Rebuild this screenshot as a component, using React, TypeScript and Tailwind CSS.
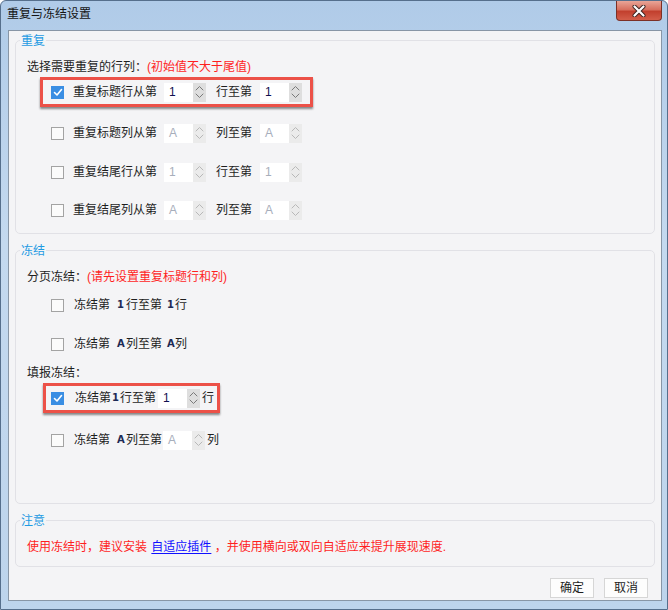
import React from 'react';

const Chevron = ({ up, color }: { up?: boolean; color: string }) => (
  <svg width="9" height="6" viewBox="0 0 9 6" fill="none">
    <polyline
      points={up ? '1,5 4.5,1.5 8,5' : '1,1 4.5,4.5 8,1'}
      stroke={color}
      strokeWidth="1"
      strokeLinecap="round"
      strokeLinejoin="round"
    />
  </svg>
);

const Check = ({ on }: { on?: boolean }) =>
  on ? (
    <span className="flex h-[13px] w-[13px] shrink-0 items-center justify-center bg-[#3a8ee3]">
      <svg width="10" height="9" viewBox="0 0 10 9" fill="none">
        <polyline points="1.5,4.5 4,7 8.5,1.5" stroke="#fff" strokeWidth="1.6" strokeLinecap="round" strokeLinejoin="round" />
      </svg>
    </span>
  ) : (
    <span className="h-[13px] w-[13px] shrink-0 border border-[#a3a3a3] bg-[#fbfbfb]" />
  );

const Spin = ({ value, disabled, className = '' }: { value: string; disabled?: boolean; className?: string }) => (
  <div className={`flex h-[19px] shrink-0 ${className}`}>
    <div
      className={`flex w-[29px] items-center bg-white pl-[5px] text-[12px] ${
        disabled ? 'text-[#a7aebb]' : 'text-[#101050]'
      }`}
    >
      {value}
    </div>
    <div
      className={`flex w-[13px] flex-col items-center justify-center gap-[2px] ${
        disabled ? 'bg-[#ebebeb]' : 'bg-[#dedede]'
      }`}
    >
      <Chevron up color={disabled ? '#b8b8b8' : '#7a7a7a'} />
      <Chevron color={disabled ? '#b8b8b8' : '#7a7a7a'} />
    </div>
  </div>
);

// bold single-character value shown inline in the freeze rows
const Glyph = ({ children, className = '' }: { children: React.ReactNode; className?: string }) => (
  <span
    className={`inline-block w-[7px] shrink-0 text-center font-['DejaVu_Sans',sans-serif] text-[10px] font-bold text-[#1c2a55] ${className}`}
  >
    {children}
  </span>
);

const Group = ({ title, className = '', children }: { title: string; className?: string; children: React.ReactNode }) => (
  <div className={`relative mx-[6px] rounded-[5px] border border-[#e1e1e6] pl-[11px] ${className}`}>
    <span className="absolute -top-[8px] left-[4px] bg-[#f4f4f6] px-[1px] leading-[16px] text-[#1f9be3]">{title}</span>
    {children}
  </div>
);

const hl = 'border-[#ec5148] shadow-[0_2px_2px_rgba(0,0,0,0.45)]';

const RepeatRow = ({
  on,
  highlight,
  label,
  mid,
  value,
  disabled,
  className = '',
}: {
  on?: boolean;
  highlight?: boolean;
  label: string;
  mid: string;
  value: string;
  disabled?: boolean;
  className?: string;
}) => (
  <div
    className={`ml-[13px] flex h-[30px] w-[273px] items-center whitespace-nowrap border-[3px] pl-[8px] ${
      highlight ? hl : 'border-transparent'
    } ${className}`}
  >
    <Check on={on} />
    <span className="ml-[9px]">{label}</span>
    <Spin value={value} disabled={disabled} className="ml-[7px]" />
    <span className="ml-[10px]">{mid}</span>
    <Spin value={value} disabled={disabled} className="ml-[8px]" />
  </div>
);

export default function App() {
  return (
    <div className="flex h-[610px] w-[668px] flex-col overflow-hidden rounded-t-[6px] border border-[#566f8c] bg-[linear-gradient(180deg,#b0cbe8_0%,#c4d9ef_40%,#bdd4ec_100%)] font-['Liberation_Sans','Noto_Sans_CJK_SC',sans-serif] text-[12px] leading-[16px] text-[#1e1e1e]">
      <div className="flex h-[29px] shrink-0 items-start justify-between">
        <span className="pl-[6px] pt-[5px] text-[#141414]">重复与冻结设置</span>
        <div className="mr-[5px] flex h-[20px] w-[46px] items-center justify-center rounded-b-[4px] border border-t-0 border-[#7c3026] bg-[linear-gradient(180deg,#e9a597_0%,#d7705f_45%,#c2402e_55%,#d35e4a_100%)]">
          <svg width="14" height="12" viewBox="0 0 14 12">
            <path d="M2.5 1.5 L11.5 10.5 M11.5 1.5 L2.5 10.5" stroke="#3b2320" strokeWidth="4" strokeLinecap="round" />
            <path d="M2.5 1.5 L11.5 10.5 M11.5 1.5 L2.5 10.5" stroke="#ffffff" strokeWidth="2.2" strokeLinecap="round" />
          </svg>
        </div>
      </div>

      <div className="ml-[7px] mr-[5px] flex h-[571px] shrink-0 flex-col border border-[#8896a6] bg-[#f4f4f6]">
        <Group title="重复" className="mt-[9px] pb-[8px] pt-[18px]">
          <div>
            选择需要重复的行列：<span className="text-[#ff1f1f]">(初始值不大于尾值)</span>
          </div>
          <RepeatRow on highlight label="重复标题行从第" mid="行至第" value="1" className="mt-[2px]" />
          <RepeatRow label="重复标题列从第" mid="列至第" value="A" disabled className="mt-[11px]" />
          <RepeatRow label="重复结尾行从第" mid="行至第" value="1" disabled className="mt-[9px]" />
          <RepeatRow label="重复结尾列从第" mid="列至第" value="A" disabled className="mt-[8px]" />
        </Group>

        <Group title="冻结" className="mt-[16px] pb-[48px] pt-[18px]">
          <div>
            分页冻结：<span className="text-[#ff1f1f]">(请先设置重复标题行和列)</span>
          </div>
          <div className="ml-[16px] mt-[5px] flex h-[30px] w-[220px] items-center whitespace-nowrap border-[3px] border-transparent pl-[5px]">
            <Check />
            <span className="ml-[10px]">冻结第</span>
            <Glyph className="ml-[7px]">1</Glyph>
            <span className="ml-[2px]">行至第</span>
            <Glyph className="ml-[5px]">1</Glyph>
            <span className="ml-[1px]">行</span>
          </div>
          <div className="ml-[16px] mt-[9px] flex h-[30px] w-[220px] items-center whitespace-nowrap border-[3px] border-transparent pl-[5px]">
            <Check />
            <span className="ml-[10px]">冻结第</span>
            <Glyph className="ml-[7px]">A</Glyph>
            <span className="ml-[2px]">列至第</span>
            <Glyph className="ml-[5px]">A</Glyph>
            <span className="ml-[1px]">列</span>
          </div>
          <div className="mt-[6px]">填报冻结：</div>
          <div className={`ml-[16px] mt-[2px] flex h-[30px] w-[177px] items-center whitespace-nowrap border-[3px] pl-[5px] ${hl}`}>
            <Check on />
            <span className="ml-[11px]">冻结第</span>
            <Glyph className="ml-[1px]">1</Glyph>
            <span className="ml-[1px]">行至第</span>
            <Spin value="1" className="ml-[2px]" />
            <span className="ml-[2px]">行</span>
          </div>
          <div className="ml-[16px] mt-[12px] flex h-[30px] w-[220px] items-center whitespace-nowrap border-[3px] border-transparent pl-[5px]">
            <Check />
            <span className="ml-[10px]">冻结第</span>
            <Glyph className="ml-[7px]">A</Glyph>
            <span className="ml-[2px]">列至第</span>
            <Spin value="A" disabled className="ml-[1px]" />
            <span className="ml-[2px]">列</span>
          </div>
        </Group>

        <Group title="注意" className="mt-[16px] pb-[11px] pt-[18px]">
          <div className="text-[#ff1f1f]">
            使用冻结时，建议安装{' '}
            <span className="ml-[1px] text-[#1010ff] underline underline-offset-2">自适应插件</span> ，并使用横向或双向自适应来提升展现速度.
          </div>
        </Group>

        <div className="mt-[11px] flex justify-end gap-[10px] pr-[13px]">
          <button className="flex h-[20px] w-[44px] items-center justify-center border border-[#d6d6d6] bg-[#fdfdfd] text-[12px] text-[#1e1e1e]">
            确定
          </button>
          <button className="flex h-[20px] w-[44px] items-center justify-center border border-[#d6d6d6] bg-[#fdfdfd] text-[12px] text-[#1e1e1e]">
            取消
          </button>
        </div>
      </div>
    </div>
  );
}
